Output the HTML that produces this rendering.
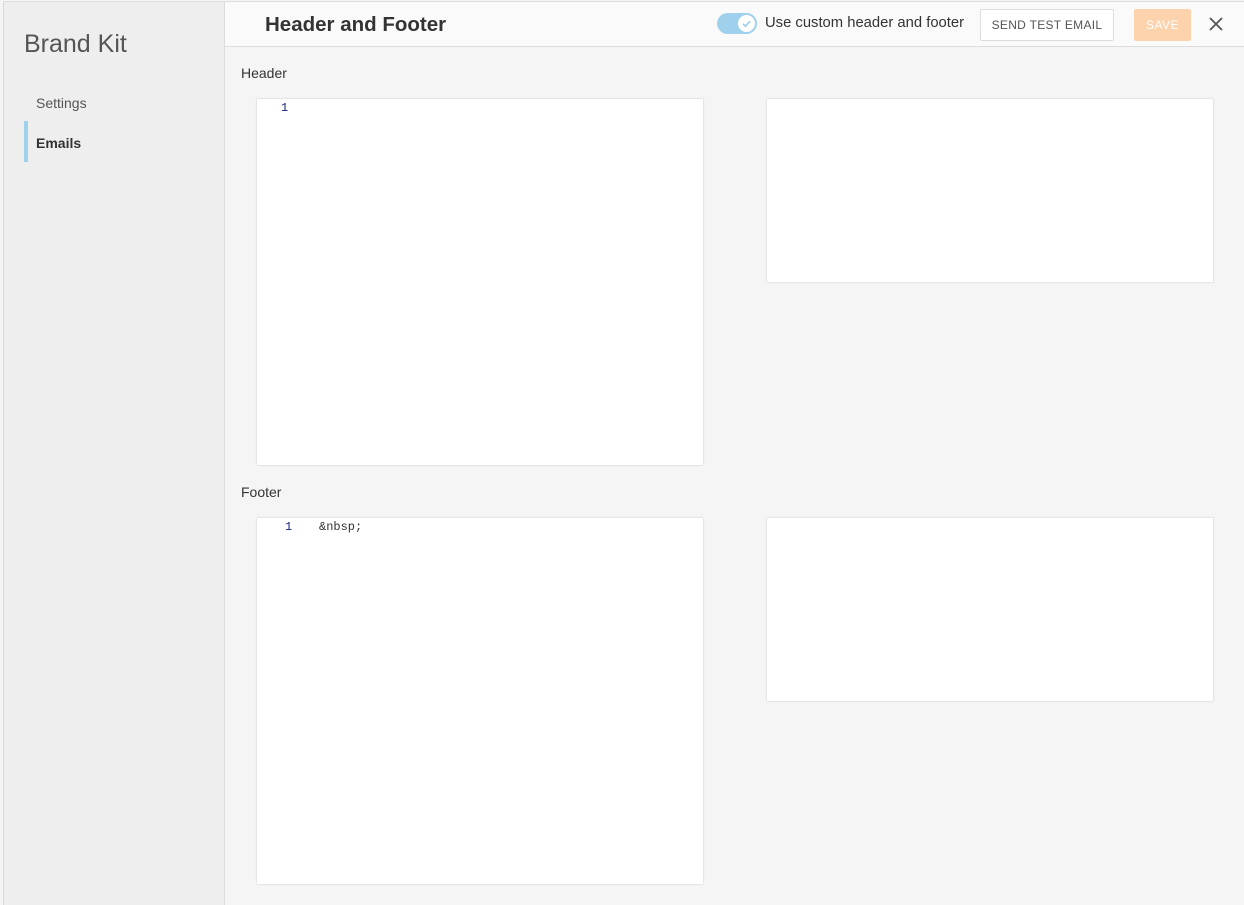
<!DOCTYPE html>
<html><head><meta charset="utf-8"><style>
*{box-sizing:border-box;margin:0;padding:0}
body{width:1244px;height:905px;overflow:hidden;background:#f5f5f5;font-family:"Liberation Sans",sans-serif;position:relative;color:#333}
.side{position:absolute;left:3px;top:1px;width:222px;height:904px;background:#eeeeee;border-left:1px solid #d8d8d8;border-right:1px solid #dcdcdc;border-top:1px solid #ddd}
.side h1{position:absolute;left:20px;top:28px;font-size:25px;font-weight:normal;color:#555}
.side .it{position:absolute;left:32px;font-size:14px;color:#555}
.bar{position:absolute;left:24px;top:121px;width:4px;height:41px;background:#9fd0ec}
.top{position:absolute;left:225px;top:1px;right:0;height:46px;background:#fafafa;border-bottom:1px solid #ddd;border-top:1px solid #ddd}
.top h2{position:absolute;left:40px;top:11px;font-size:20.5px;font-weight:bold;color:#333}
.tog{position:absolute;left:492px;top:11px;width:40px;height:21px;border-radius:11px;background:#9fd0ec}
.tog i{position:absolute;right:2px;top:2px;width:17px;height:17px;border-radius:50%;background:#fff}
.lbl{position:absolute;left:540px;top:13px;font-size:14.8px;color:#333}
.btn{position:absolute;left:755px;top:7px;width:134px;height:32px;border:1px solid #ddd;background:#fff;border-radius:2px;font-size:12px;letter-spacing:.3px;color:#555;text-align:center;line-height:30px}
.save{position:absolute;left:909px;top:7px;width:57px;height:32px;background:#fdd3ae;border-radius:2px;color:#fff;font-size:12px;text-align:center;line-height:32px;letter-spacing:.5px}
.sec{position:absolute;left:241px;font-size:14px;color:#333}
.ed{position:absolute;background:#fff;box-shadow:0 0 2px rgba(0,0,0,.2)}
.ln{position:absolute;font-family:"Liberation Mono",monospace;font-size:12px;color:#1a237e}
.code{position:absolute;font-family:"Liberation Mono",monospace;font-size:12px;color:#333}
</style></head><body>
<div class="side"><h1>Brand Kit</h1><div class="it" style="top:93px">Settings</div><div class="it" style="top:133px;font-weight:bold;color:#333">Emails</div></div>
<div class="bar"></div>
<div class="top"><h2>Header and Footer</h2>
<div class="tog"><i><svg width="17" height="17" viewBox="0 0 17 17"><path d="M5 8.7l2.5 2.5 4.5-5" fill="none" stroke="#9fd0ec" stroke-width="1.8"/></svg></i></div>
<div class="lbl">Use custom header and footer</div>
<div class="btn">SEND TEST EMAIL</div>
<div class="save">SAVE</div>
<svg style="position:absolute;left:983px;top:14px" width="16" height="16" viewBox="0 0 16 16"><path d="M2 2L14 14M14 2L2 14" stroke="#555" stroke-width="1.8"/></svg>
</div>
<div class="sec" style="top:65px">Header</div>
<div class="ed" style="left:257px;top:99px;width:446px;height:366px"><span class="ln" style="left:24px;top:2px">1</span></div>
<div class="ed" style="left:767px;top:99px;width:446px;height:183px"></div>
<div class="sec" style="top:484px">Footer</div>
<div class="ed" style="left:257px;top:518px;width:446px;height:366px"><span class="ln" style="left:28px;top:2px">1</span><span class="code" style="left:62px;top:2px">&amp;nbsp;</span></div>
<div class="ed" style="left:767px;top:518px;width:446px;height:183px"></div>
</body></html>
